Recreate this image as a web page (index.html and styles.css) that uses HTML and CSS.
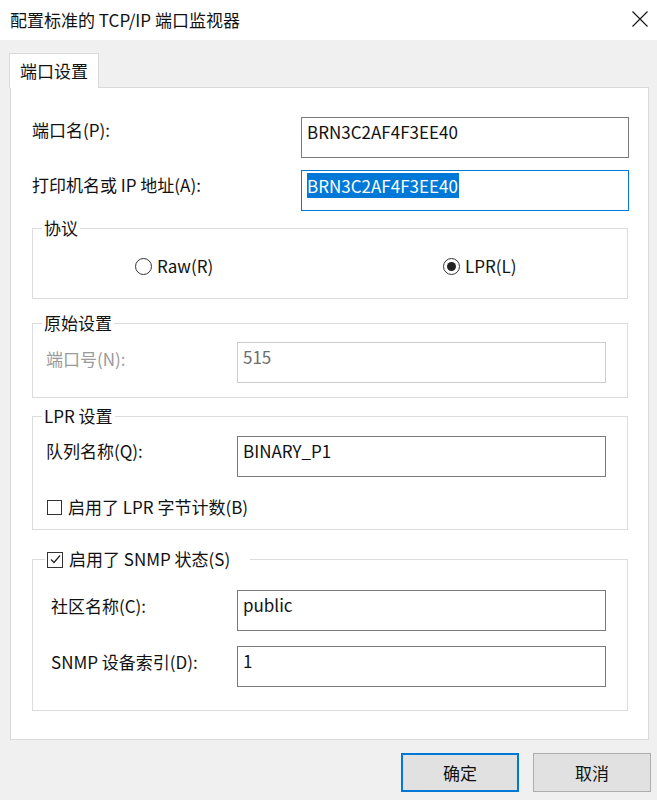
FILE: index.html
```html
<!DOCTYPE html>
<html lang="zh-CN">
<head>
<meta charset="utf-8">
<title>配置标准的 TCP/IP 端口监视器</title>
<link rel="stylesheet" href="styles.css">
</head>
<body>
<div class="window">
  <div class="titlebar">
    <span class="title">配置标准的 TCP/IP 端口监视器</span>
    <svg class="close" width="16" height="16" viewBox="0 0 16 16"><path d="M0.5 0.5 L15.5 15.5 M15.5 0.5 L0.5 15.5" stroke="#111" stroke-width="1.1" fill="none"/></svg>
  </div>
  <div class="body">
    <div class="tabs"><div class="tab">端口设置</div></div>
    <div class="panel">
      <div class="row top first">
        <span class="label">端口名(P):</span>
        <div class="input wide">BRN3C2AF4F3EE40</div>
      </div>
      <div class="row top second">
        <span class="label">打印机名或 IP 地址(A):</span>
        <div class="input wide focus"><span class="sel">BRN3C2AF4F3EE40</span></div>
      </div>

      <fieldset class="group g-proto">
        <legend>协议</legend>
        <div class="radios">
          <span class="radio-item"><span class="radio"></span>Raw(R)</span>
          <span class="radio-item"><span class="radio checked"></span>LPR(L)</span>
        </div>
      </fieldset>

      <fieldset class="group g-raw">
        <legend>原始设置</legend>
        <div class="row">
          <span class="label disabled">端口号(N):</span>
          <div class="input disabled-input">515</div>
        </div>
      </fieldset>

      <fieldset class="group g-lpr">
        <legend>LPR 设置</legend>
        <div class="row">
          <span class="label">队列名称(Q):</span>
          <div class="input">BINARY_P1</div>
        </div>
        <div class="check-row"><span class="checkbox"></span>启用了 LPR 字节计数(B)</div>
      </fieldset>

      <fieldset class="group g-snmp">
        <legend class="check-legend"><span class="checkbox checked"><svg width="13" height="13" viewBox="0 0 13 13"><path d="M2 6.5 L5 9.5 L11 2.5" stroke="#222" stroke-width="1.2" fill="none"/></svg></span>启用了 SNMP 状态(S)</legend>
        <div class="row">
          <span class="label">社区名称(C):</span>
          <div class="input">public</div>
        </div>
        <div class="row second-snmp">
          <span class="label">SNMP 设备索引(D):</span>
          <div class="input">1</div>
        </div>
      </fieldset>
    </div>
    <div class="footer">
      <button class="btn default">确定</button>
      <button class="btn">取消</button>
    </div>
  </div>
</div>
</body>
</html>
```
FILE: styles.css
```css
* { box-sizing: border-box; }
html, body { margin: 0; padding: 0; }
body {
  width: 657px;
  height: 800px;
  overflow: hidden;
  background: #f0f0f0;
  font-family: "Noto Sans CJK SC", "Noto Sans", sans-serif;
  font-size: 17px;
  line-height: 20px;
  color: #111;
}
.window { width: 657px; height: 800px; display: flex; flex-direction: column; }
.titlebar {
  height: 40px;
  background: #fff;
  display: flex;
  align-items: center;
  justify-content: space-between;
  padding: 0 9px 0 10px;
}
.title { font-size: 17px; color: #111; margin-top: -1px; }
.close { margin-top: -3px; }
.body { flex: 1; padding: 13px 8px 0 10px; display: flex; flex-direction: column; }
.tabs { height: 34px; display: flex; }
.tab {
  margin-left: -1px;
  width: 90px;
  height: 35px;
  background: #fff;
  border: 1px solid #d9d9d9;
  border-bottom: none;
  padding: 7px 0 0 10px;
  position: relative;
  z-index: 1;
}
.panel {
  width: 639px;
  height: 653px;
  background: #fff;
  border: 1px solid #d9d9d9;
  padding: 29px 0 0 21px;
}
.row { display: flex; align-items: flex-start; }
.label { display: block; padding-top: 6px; white-space: nowrap; }
.row.top .label { width: 269px; padding-top: 3px; }
.row.second { margin-top: 12px; }
.row.second .label { padding-top: 5px; }
.input {
  width: 369px;
  height: 41px;
  border: 1px solid #7a7a7a;
  background: #fff;
  padding: 2px 5px 0 5px;
  line-height: 24px;
  color: #111;
}
.input.wide { width: 328px; }
.input.focus { border-color: #0078d7; }
.sel { background: #0078d7; color: #fff; display: inline-block; line-height: 25px; padding-right: 1px; }
.label.disabled { color: #9a9a9a; }
.disabled-input { border-color: #cccccc; color: #6d6d6d; }

.group {
  margin: 0;
  width: 596px;
  border: 1px solid #dcdcdc;
  padding: 0 0 0 13px;
  min-width: 0;
}
.group legend { padding: 0 2px; margin-left: -4px; line-height: 20px; color: #111; }
.group .label { width: 191px; }
.g-proto { margin-top: 7px; padding-top: 18px; padding-bottom: 22px; }
.radios { display: grid; grid-template-columns: 308px auto; margin-left: 89px; }
.radio-item { display: flex; align-items: center; }
.radio {
  width: 17px; height: 17px;
  border: 1px solid #333;
  border-radius: 50%;
  margin-right: 5px;
  background: #fff;
  display: flex; align-items: center; justify-content: center;
}
.radio.checked::after {
  content: "";
  width: 9px; height: 9px;
  border-radius: 50%;
  background: #222;
}
.g-raw { margin-top: 14px; padding-top: 9px; padding-bottom: 14px; }
.g-raw .label { padding-top: 7px; }
.g-lpr { margin-top: 8px; padding-top: 10px; padding-bottom: 12px; }
.g-lpr .label { padding-top: 5px; }
.check-row { display: flex; align-items: center; margin-top: 20px; margin-left: 1px; }
.checkbox {
  width: 15px; height: 15px;
  border: 1px solid #333;
  background: #fff;
  margin-right: 6px;
  display: inline-flex; align-items: center; justify-content: center;
  flex: none;
}
.g-snmp { margin-top: 19px; padding: 21px 0 23px 18px; }
.g-snmp .label { width: 186px; padding-top: 6px; }
.g-snmp legend.check-legend { display: flex; align-items: center; margin-left: -6px; padding: 0 20px 0 2px; }
.g-snmp legend .checkbox { width: 16px; height: 16px; margin-top: 1px; }
.row.second-snmp { margin-top: 15px; }

.footer { display: flex; justify-content: flex-end; gap: 14px; padding: 13px 0 0 0; margin-right: -2px; }
.btn {
  width: 118px;
  height: 39px;
  background: #e1e1e1;
  border: 1px solid #adadad;
  font-family: inherit;
  font-size: 17px;
  color: #111;
  padding: 0;
}
.btn.default { border: 2px solid #0078d7; }
```
